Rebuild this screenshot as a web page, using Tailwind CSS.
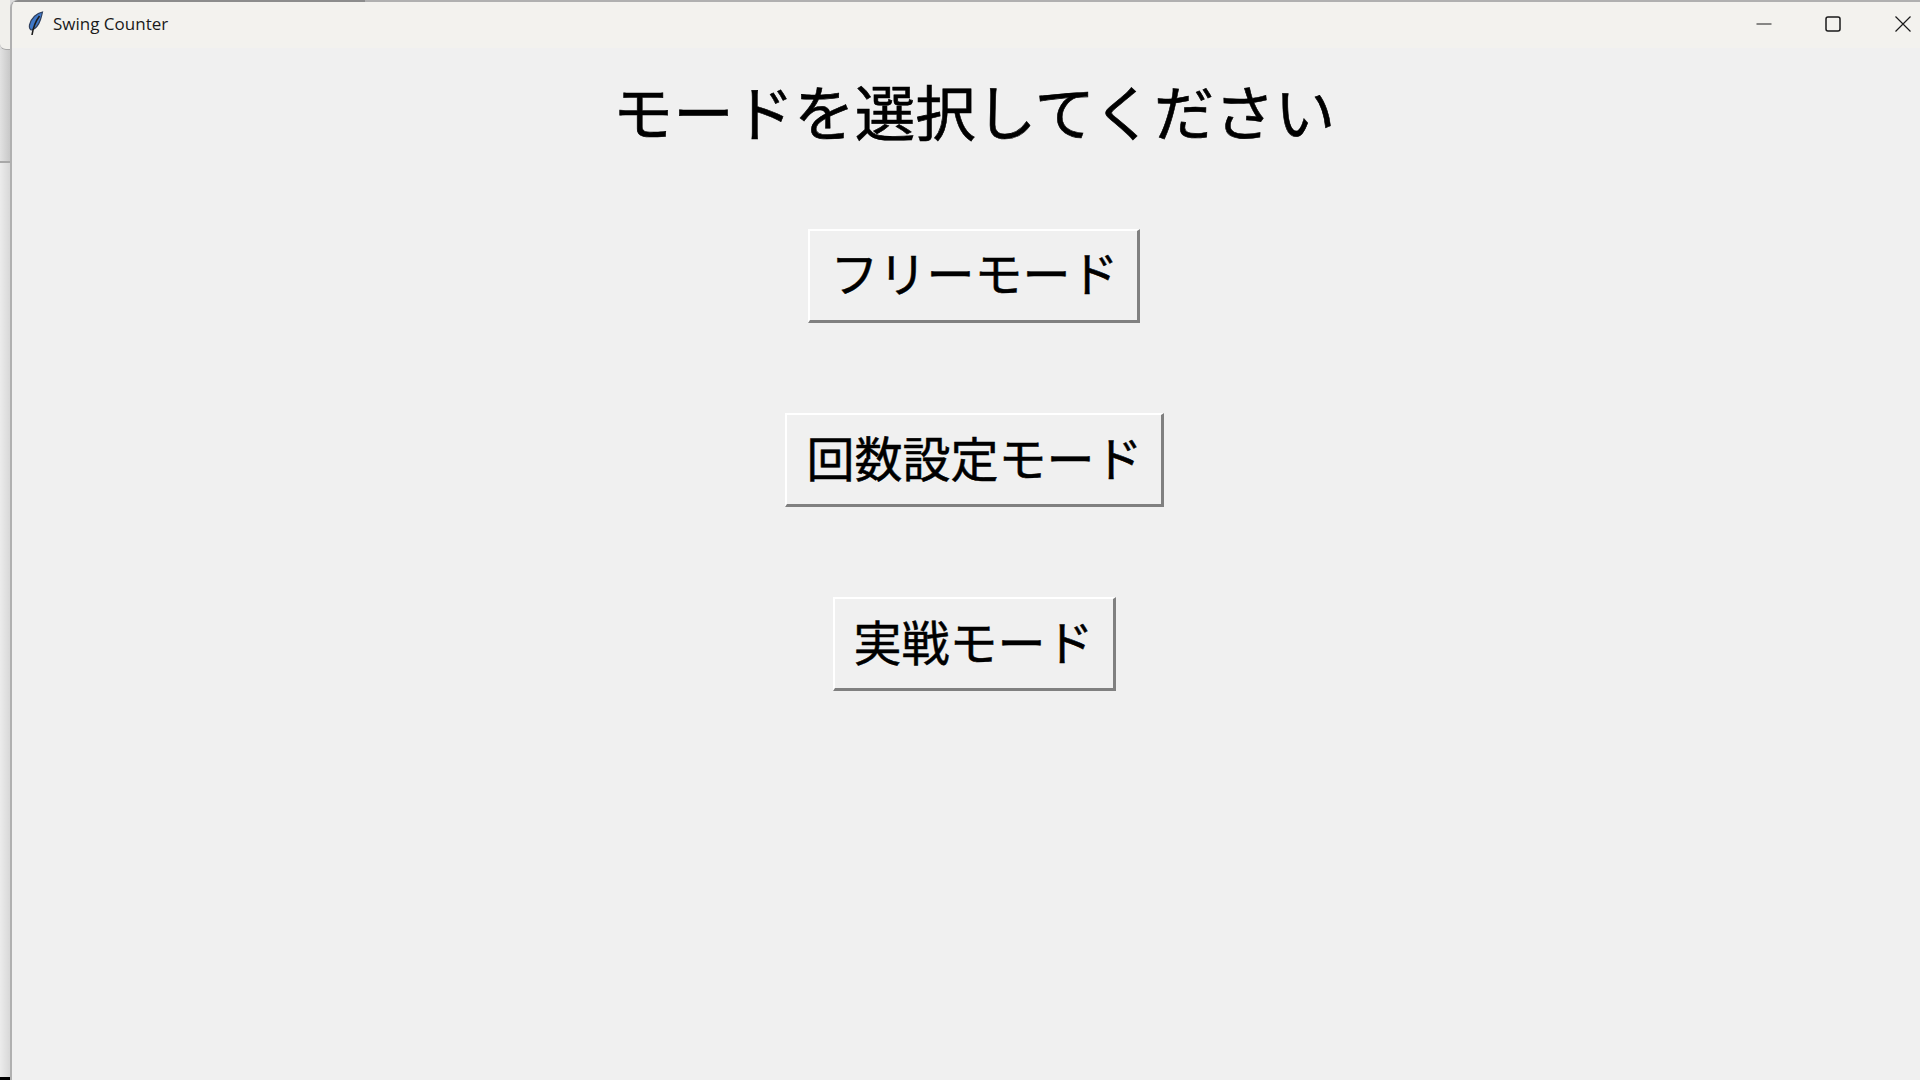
<!DOCTYPE html>
<html lang="ja">
<head>
    <meta charset="UTF-8">
    <title>Swing Counter</title>
    <script src="https://cdn.jsdelivr.net/npm/@tailwindcss/browser@4"></script>
</head>
<body class="h-[1080px] w-[1920px] overflow-hidden flex bg-[#dcdcdc] font-['Noto_Sans_CJK_JP','Noto_Sans',sans-serif] text-black">
    <!-- sliver of the window behind -->
    <div class="w-[10px] shrink-0 flex flex-col">
        <div class="h-[50px] bg-[#f1f0ec] rounded-bl-[6px] border-b border-[#a8a8a8]"></div>
        <div class="h-[113px] bg-gradient-to-r from-[#e2e2e2] to-[#c8c8c8] border-b-2 border-[#a8a8a8]"></div>
        <div class="flex-1 bg-gradient-to-r from-[#ececec] to-[#d8d8d8]"></div>
        <div class="h-[3px] bg-black"></div>
    </div>

    <!-- Tk window, runs a little past the right edge of the screen -->
    <div class="w-[1910px] shrink-0 flex flex-col border-l-2 border-[#b0b0b0] rounded-tl-[8px] overflow-hidden">
        <div class="h-[2px] shrink-0 flex">
            <div class="w-[353px] bg-[#8c8c8c]"></div>
            <div class="flex-1 bg-[#b0b0b0]"></div>
        </div>
        <div class="h-[46px] shrink-0 pb-[3px] bg-[#f3f2ee] flex items-center">
            <svg class="ml-[15px] w-[17px] h-[25px]" viewBox="0 0 17 25">
                <path d="M15.500 1 C10 2 4 7 2.500 14 C2 16.500 3 19 5 19 C9 17.500 12 13 13.500 8.500 C14.300 6 15 3.500 15.500 1 Z" fill="#3f78c8" stroke="#2f3f5c" stroke-width="1.200"/>
                <path d="M12.500 5 C9.500 9 6.500 14 5 24" fill="none" stroke="#1c1c1c" stroke-width="1.600"/>
            </svg>
            <span class="ml-[9px] text-[17px] leading-none font-['Open_Sans',sans-serif] text-[#1a1a1a]">Swing Counter</span>
            <div class="ml-auto flex items-center">
                <svg class="w-[16px] h-[16px] mr-[53px]" viewBox="0 0 16 16"><path d="M0.500 8H15.500" stroke="#1a1a1a" stroke-width="1"/></svg>
                <svg class="w-[16px] h-[16px] mr-[54px]" viewBox="0 0 16 16"><rect x="1" y="1" width="14" height="14" rx="2" fill="none" stroke="#1a1a1a" stroke-width="1.500"/></svg>
                <svg class="w-[16px] h-[16px] mr-[9px]" viewBox="0 0 16 16"><path d="M0.500 0.500L15.500 15.500M15.500 0.500L0.500 15.500" stroke="#1a1a1a" stroke-width="1.200"/></svg>
            </div>
        </div>
        <main class="flex-1 bg-[#f0f0f0] pl-[16px] flex flex-col items-center">
            <h1 class="mt-[26px] h-[72px] text-[60.500px] leading-[72px] font-normal [-webkit-text-stroke:0.6px_black] whitespace-nowrap">モードを選択してください</h1>
            <div class="mt-[83px] flex flex-col items-center gap-[90px]">
                <button class="h-[94px] w-[332px] pb-[10px] pl-[2px] bg-[#f0f0f0] text-[48px] leading-none font-normal [-webkit-text-stroke:0.5px_black] whitespace-nowrap border-2 border-b-[3px] border-r-[3px] border-t-white border-l-white border-r-[#808080] border-b-[#808080]">フリーモード</button>
                <button class="h-[94px] w-[379px] pb-[8px] pl-[2px] bg-[#f0f0f0] text-[48px] leading-none font-normal [-webkit-text-stroke:0.5px_black] whitespace-nowrap border-2 border-b-[3px] border-r-[3px] border-t-white border-l-white border-r-[#808080] border-b-[#808080]">回数設定モード</button>
                <button class="h-[94px] w-[283px] pb-[8px] bg-[#f0f0f0] text-[48px] leading-none font-normal [-webkit-text-stroke:0.5px_black] whitespace-nowrap border-2 border-b-[3px] border-r-[3px] border-t-white border-l-white border-r-[#808080] border-b-[#808080]">実戦モード</button>
            </div>
        </main>
    </div>
</body>
</html>
